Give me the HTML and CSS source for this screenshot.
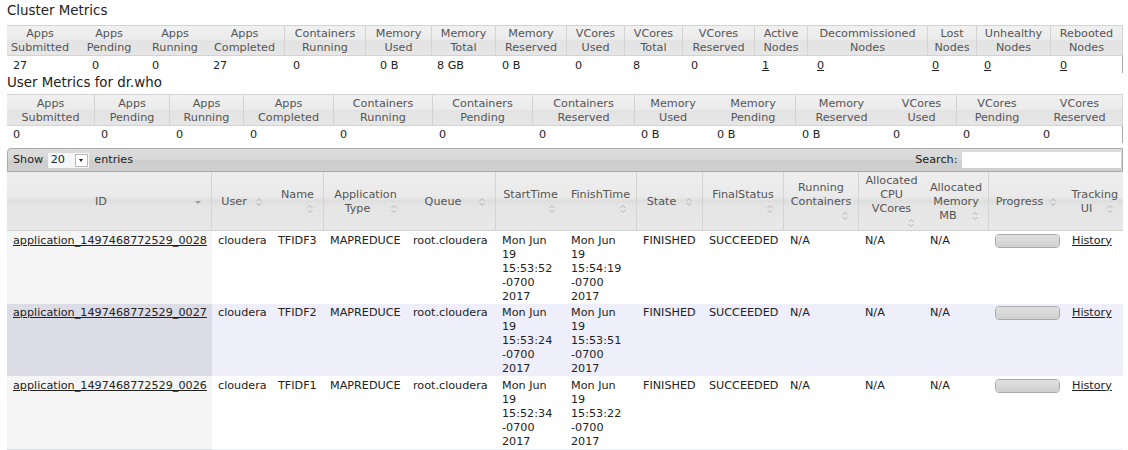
FILE: index.html
```html
<!DOCTYPE html>
<html>
<head>
<meta charset="utf-8">
<title>Applications</title>
<link rel="stylesheet" href="styles.css">
</head>
<body>
<div class="page">
  <h3 class="title t1">Cluster Metrics</h3>
  <div class="mh grid-cl-h">
    <div class="hc">Apps<br>Submitted</div>
    <div class="hc">Apps<br>Pending</div>
    <div class="hc">Apps<br>Running</div>
    <div class="hc sep">Apps<br>Completed</div>
    <div class="hc sep">Containers<br>Running</div>
    <div class="hc sep">Memory<br>Used</div>
    <div class="hc sep">Memory<br>Total</div>
    <div class="hc sep">Memory<br>Reserved</div>
    <div class="hc sep">VCores<br>Used</div>
    <div class="hc sep">VCores<br>Total</div>
    <div class="hc sep">VCores<br>Reserved</div>
    <div class="hc sep">Active<br>Nodes</div>
    <div class="hc sep">Decommissioned<br>Nodes</div>
    <div class="hc sep">Lost<br>Nodes</div>
    <div class="hc sep">Unhealthy<br>Nodes</div>
    <div class="hc sep">Rebooted<br>Nodes</div>
  </div>
  <div class="md md-cl grid-cl-d">
    <div class="dc">27</div>
    <div class="dc">0</div>
    <div class="dc">0</div>
    <div class="dc">27</div>
    <div class="dc">0</div>
    <div class="dc">0 B</div>
    <div class="dc">8 GB</div>
    <div class="dc">0 B</div>
    <div class="dc">0</div>
    <div class="dc">8</div>
    <div class="dc">0</div>
    <div class="dc"><a href="#">1</a></div>
    <div class="dc"><a href="#">0</a></div>
    <div class="dc"><a href="#">0</a></div>
    <div class="dc"><a href="#">0</a></div>
    <div class="dc"><a href="#">0</a></div>
  </div>

  <h3 class="title t2">User Metrics for dr.who</h3>
  <div class="mh mh-um grid-um">
    <div class="hc sep">Apps<br>Submitted</div>
    <div class="hc sep">Apps<br>Pending</div>
    <div class="hc sep">Apps<br>Running</div>
    <div class="hc sep">Apps<br>Completed</div>
    <div class="hc sep">Containers<br>Running</div>
    <div class="hc sep">Containers<br>Pending</div>
    <div class="hc sep">Containers<br>Reserved</div>
    <div class="hc">Memory<br>Used</div>
    <div class="hc sep">Memory<br>Pending</div>
    <div class="hc">Memory<br>Reserved</div>
    <div class="hc sep">VCores<br>Used</div>
    <div class="hc">VCores<br>Pending</div>
    <div class="hc sep">VCores<br>Reserved</div>
  </div>
  <div class="md md-um grid-um">
    <div class="dc">0</div>
    <div class="dc">0</div>
    <div class="dc">0</div>
    <div class="dc">0</div>
    <div class="dc">0</div>
    <div class="dc">0</div>
    <div class="dc">0</div>
    <div class="dc">0 B</div>
    <div class="dc">0 B</div>
    <div class="dc">0 B</div>
    <div class="dc">0</div>
    <div class="dc">0</div>
    <div class="dc">0</div>
  </div>

  <div class="toolbar">
    <div class="len">Show <span class="sel"><span class="selv">20</span><span class="selarr"></span></span> entries</div>
    <div class="filter">Search: <input class="search" type="text"></div>
  </div>

  <div class="ahead grid-apps">
    <div class="ah sep"><div class="hw"><div class="hl"><span>ID</span><svg class="si" width="16" height="14" viewBox="0 0 16 14"><path d="M5 6h6l-3 3z" fill="#9c9c9c"/></svg></div></div></div>
    <div class="ah"><div class="hw"><div class="hl"><span>User</span><svg class="si" width="16" height="14" viewBox="0 0 16 14"><path d="M5.5 6 8 3.5 10.5 6M5.5 8 8 10.5 10.5 8" fill="none" stroke="#b4b4b4"/></svg></div></div></div>
    <div class="ah sep"><div class="hw"><div>Name</div><div class="hl"><span></span><svg class="si" width="16" height="14" viewBox="0 0 16 14"><path d="M5.5 6 8 3.5 10.5 6M5.5 8 8 10.5 10.5 8" fill="none" stroke="#b4b4b4"/></svg></div></div></div>
    <div class="ah"><div class="hw"><div>Application</div><div class="hl"><span>Type</span><svg class="si" width="16" height="14" viewBox="0 0 16 14"><path d="M5.5 6 8 3.5 10.5 6M5.5 8 8 10.5 10.5 8" fill="none" stroke="#b4b4b4"/></svg></div></div></div>
    <div class="ah sep"><div class="hw"><div class="hl"><span>Queue</span><svg class="si" width="16" height="14" viewBox="0 0 16 14"><path d="M5.5 6 8 3.5 10.5 6M5.5 8 8 10.5 10.5 8" fill="none" stroke="#b4b4b4"/></svg></div></div></div>
    <div class="ah"><div class="hw"><div>StartTime</div><div class="hl"><span></span><svg class="si" width="16" height="14" viewBox="0 0 16 14"><path d="M5.5 6 8 3.5 10.5 6M5.5 8 8 10.5 10.5 8" fill="none" stroke="#b4b4b4"/></svg></div></div></div>
    <div class="ah sep"><div class="hw"><div>FinishTime</div><div class="hl"><span></span><svg class="si" width="16" height="14" viewBox="0 0 16 14"><path d="M5.5 6 8 3.5 10.5 6M5.5 8 8 10.5 10.5 8" fill="none" stroke="#b4b4b4"/></svg></div></div></div>
    <div class="ah sep"><div class="hw"><div class="hl"><span>State</span><svg class="si" width="16" height="14" viewBox="0 0 16 14"><path d="M5.5 6 8 3.5 10.5 6M5.5 8 8 10.5 10.5 8" fill="none" stroke="#b4b4b4"/></svg></div></div></div>
    <div class="ah sep"><div class="hw"><div>FinalStatus</div><div class="hl"><span></span><svg class="si" width="16" height="14" viewBox="0 0 16 14"><path d="M5.5 6 8 3.5 10.5 6M5.5 8 8 10.5 10.5 8" fill="none" stroke="#b4b4b4"/></svg></div></div></div>
    <div class="ah sep"><div class="hw"><div>Running</div><div>Containers</div><div class="hl"><span></span><svg class="si" width="16" height="14" viewBox="0 0 16 14"><path d="M5.5 6 8 3.5 10.5 6M5.5 8 8 10.5 10.5 8" fill="none" stroke="#b4b4b4"/></svg></div></div></div>
    <div class="ah"><div class="hw"><div>Allocated</div><div>CPU</div><div>VCores</div><div class="hl"><span></span><svg class="si" width="16" height="14" viewBox="0 0 16 14"><path d="M5.5 6 8 3.5 10.5 6M5.5 8 8 10.5 10.5 8" fill="none" stroke="#b4b4b4"/></svg></div></div></div>
    <div class="ah sep"><div class="hw"><div>Allocated</div><div>Memory</div><div class="hl"><span>MB</span><svg class="si" width="16" height="14" viewBox="0 0 16 14"><path d="M5.5 6 8 3.5 10.5 6M5.5 8 8 10.5 10.5 8" fill="none" stroke="#b4b4b4"/></svg></div></div></div>
    <div class="ah"><div class="hw"><div class="hl"><span>Progress</span><svg class="si" width="16" height="14" viewBox="0 0 16 14"><path d="M5.5 6 8 3.5 10.5 6M5.5 8 8 10.5 10.5 8" fill="none" stroke="#b4b4b4"/></svg></div></div></div>
    <div class="ah"><div class="hw"><div>Tracking</div><div class="hl"><span>UI</span><svg class="si" width="16" height="14" viewBox="0 0 16 14"><path d="M5.5 6 8 3.5 10.5 6M5.5 8 8 10.5 10.5 8" fill="none" stroke="#b4b4b4"/></svg></div></div></div>
  </div>

  <div class="arow odd grid-apps">
    <div class="sorted"><a href="#">application_1497468772529_0028</a></div>
    <div>cloudera</div>
    <div>TFIDF3</div>
    <div>MAPREDUCE</div>
    <div>root.cloudera</div>
    <div>Mon Jun<br>19<br>15:53:52<br>-0700<br>2017</div>
    <div>Mon Jun<br>19<br>15:54:19<br>-0700<br>2017</div>
    <div>FINISHED</div>
    <div>SUCCEEDED</div>
    <div>N/A</div>
    <div>N/A</div>
    <div>N/A</div>
    <div><div class="pbar"><div class="pval" style="width:100%"></div></div></div>
    <div><a href="#">History</a></div>
  </div>
  <div class="arow even grid-apps">
    <div class="sorted"><a href="#">application_1497468772529_0027</a></div>
    <div>cloudera</div>
    <div>TFIDF2</div>
    <div>MAPREDUCE</div>
    <div>root.cloudera</div>
    <div>Mon Jun<br>19<br>15:53:24<br>-0700<br>2017</div>
    <div>Mon Jun<br>19<br>15:53:51<br>-0700<br>2017</div>
    <div>FINISHED</div>
    <div>SUCCEEDED</div>
    <div>N/A</div>
    <div>N/A</div>
    <div>N/A</div>
    <div><div class="pbar"><div class="pval" style="width:100%"></div></div></div>
    <div><a href="#">History</a></div>
  </div>
  <div class="arow odd grid-apps">
    <div class="sorted"><a href="#">application_1497468772529_0026</a></div>
    <div>cloudera</div>
    <div>TFIDF1</div>
    <div>MAPREDUCE</div>
    <div>root.cloudera</div>
    <div>Mon Jun<br>19<br>15:52:34<br>-0700<br>2017</div>
    <div>Mon Jun<br>19<br>15:53:22<br>-0700<br>2017</div>
    <div>FINISHED</div>
    <div>SUCCEEDED</div>
    <div>N/A</div>
    <div>N/A</div>
    <div>N/A</div>
    <div><div class="pbar"><div class="pval" style="width:100%"></div></div></div>
    <div><a href="#">History</a></div>
  </div>
  <div class="arow even grid-apps filler">
    <div class="sorted"></div>
    <div></div><div></div><div></div><div></div><div></div><div></div>
    <div></div><div></div><div></div><div></div><div></div><div></div><div></div>
  </div>
</div>
</body>
</html>
```
FILE: styles.css
```css
* { box-sizing: border-box; }
html, body { margin: 0; padding: 0; background: #fff; }
body {
  font-family: "DejaVu Sans", Verdana, sans-serif;
  font-size: 11.2px;
  line-height: 14px;
  color: #222;
  overflow: hidden;
}
a { color: #222; text-decoration: underline; }

.page { padding-left: 7px; width: 1128px; }

.title {
  font-size: 13.4px;
  line-height: 16px;
  font-weight: normal;
  margin: 0;
  color: #222;
}
.t1 { padding: 3px 0 6px; }
.t2 { padding: 2px 0 3px; }

.grid-cl-h { grid-template-columns: 66px 72px 60px 80px 81px 66px 64px 71px 58px 58px 72px 53px 120px 49px 74px 72px; }
.grid-cl-d { grid-template-columns: 79px 60px 61px 80px 87px 57px 65px 73px 58px 58px 71px 55px 115px 52px 76px 69px; }
.grid-um { grid-template-columns: 88px 75px 74px 90px 99px 100px 102px 76px 85px 91px 70px 80px 86px; }
.grid-apps { grid-template-columns: 205px 60px 52px 83px 89px 69px 72px 66px 81px 75px 65px 65px 77px 57px; }

.mh {
  display: grid;
  width: 1116px;
  height: 31px;
  border-top: 1px solid #d3d3d3;
  border-bottom: 1px solid #d3d3d3;
  background: linear-gradient(#f0f0f0 0%, #ebebeb 50%, #e3e3e3 50%, #e6e6e6 100%);
}
.mh-um { height: 32px; }
.hc {
  display: flex;
  align-items: center;
  justify-content: center;
  text-align: center;
  padding-top: 1px;
  color: #555;
}
.hc.sep { border-right: 1px solid #d3d3d3; }

.md {
  display: grid;
  width: 1116px;
  height: 17px;
}
.md-um { height: 17px; }
.dc { padding: 3px 6px 0; white-space: nowrap; }
.md-um .dc { padding-top: 2px; }
.dc:last-child { border-right: 1px solid #a8a8a8; }

.toolbar {
  display: flex;
  align-items: center;
  justify-content: space-between;
  width: 1116px;
  height: 24px;
  margin-top: 5px;
  padding: 0 1px 0 5px;
  border: 1px solid #aaa;
  border-radius: 4px 0 0 0;
  background: linear-gradient(#dddddd 0%, #d7d7d7 50%, #cdcdcd 50%, #d0d0d0 100%);
  color: #222;
}
.len { display: flex; align-items: center; white-space: pre; }
.sel {
  display: inline-flex;
  align-items: center;
  width: 41px;
  height: 15px;
  margin: 0 2px 0 1px;
  background: #f6f6f6;
}
.selv { flex: 1; padding-left: 3px; }
.selarr {
  position: relative;
  width: 13px;
  height: 13px;
  margin-right: 1px;
  background: #fff;
  border: 1px solid #b8b8b8;
}
.selarr::after {
  content: "";
  position: absolute;
  left: 3px;
  top: 4px;
  border-top: 3px solid #222;
  border-left: 2.5px solid transparent;
  border-right: 2.5px solid transparent;
}
.filter { display: flex; align-items: center; white-space: pre; }
.search {
  width: 159px;
  height: 16px;
  margin: 0 0 0 1px;
  padding: 0;
  border: none;
  background: #fff;
  outline: none;
}

.ahead {
  display: grid;
  width: 1116px;
  height: 59px;
  border-bottom: 1px solid #d3d3d3;
  background: linear-gradient(#eeeeee 0%, #eaeaea 42%, #dedede 50%, #e5e5e5 58%, #e8e8e8 100%);
}
.ah {
  display: flex;
  align-items: center;
  padding: 2px 5.5px 0;
  color: #555;
  text-align: center;
  white-space: nowrap;
}
.ah.sep { border-right: 1px solid #d3d3d3; }
.hw { width: 100%; }
.hl { display: flex; align-items: center; height: 14px; }
.hl span { flex: 1; text-align: center; }
.si { flex: none; display: block; }

.arow { display: grid; width: 1116px; }
.arow > div { padding: 2.5px 6px 0; white-space: nowrap; }
.arow.odd { background: #fff; }
.arow.odd .sorted { background: #f5f5f5; }
.arow.even { background: #efeffb; }
.arow.even .sorted { background: #dcdce7; }
.arow.filler { height: 72px; }

.pbar {
  width: 100%;
  height: 14px;
  border: 1px solid #aaa;
  border-radius: 4px;
  overflow: hidden;
  background: #fff;
}
.pval {
  height: 100%;
  background: linear-gradient(#e0e0e0, #cfcfcf);
}
```
